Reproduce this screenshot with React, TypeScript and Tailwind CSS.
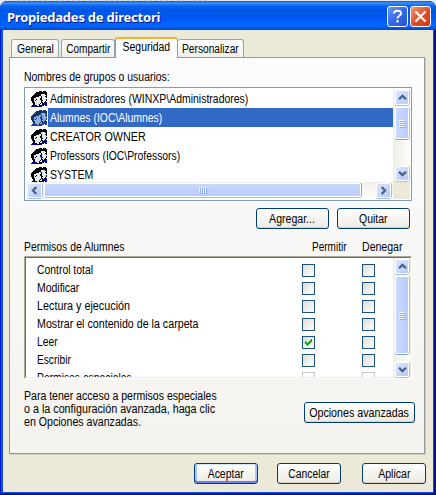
import React from "react";

const TEXT = "font-['Liberation_Sans',Arial,sans-serif] text-[12px] leading-[13px] whitespace-nowrap text-black";

const USER_PIXELS = [
  "........KKK.KKK.",
  ".....KKKKKKKKKKK",
  "....KKKKKKKKKKKK",
  "...KKKKKKKWWWWKK",
  "..KKKKKKKKWWWWWK",
  ".KKKKKKKWWKWWWBK",
  "KKKKKWWWWWKWWWWK",
  "KKKWWWWWWKKWWWWW",
  "KKKWWKWWWBKWWWWK",
  "KKKWKWWWWWKKWWWK",
  ".KKWWWWWWWKWWWK.",
  ".KKKWWWWWWKKWKBB",
  "..KKWWWWWKWKKBBB",
  "..KKWWWWKWWKBBBB",
  ".BBBKKWWKKBBB.BB",
  "BBBBBBKKKBB.....",
];

function UserIcon({ selected }: { selected?: boolean }) {
  const colors: Record<string, string> = selected
    ? { K: "#183462", W: "#8db0e2", B: "#183bb0" }
    : { K: "#000000", W: "#e4ebeb", B: "#0000b8" };
  return (
    <svg width="16" height="16" viewBox="0 0 16 16" shapeRendering="crispEdges" className="shrink-0">
      {USER_PIXELS.flatMap((row, y) =>
        row.split("").map((c, x) =>
          c === "." ? null : <rect key={`${x}-${y}`} x={x} y={y} width="1" height="1" fill={colors[c]} />
        )
      )}
    </svg>
  );
}

function Arrow({ turn }: { turn: string }) {
  return (
    <svg width="9" height="9" viewBox="0 0 9 9" className={turn}>
      <path d="M1 6.3L4.5 2.9L8 6.3" fill="none" stroke="#4d6185" strokeWidth="2.3" />
    </svg>
  );
}

const SCROLL_BTN =
  "flex shrink-0 items-center justify-center rounded-[2px] border border-white bg-linear-to-br from-[#dce6ff] to-[#b4c9fb] shadow-[0_1px_0_#a5bde8,1px_0_0_#a5bde8]";

function VScroll({ thumb, gap }: { thumb: string; gap: string }) {
  return (
    <div className="flex h-full w-[17px] shrink-0 flex-col bg-linear-to-r from-[#f0efe7] to-[#fefefb] pt-px pl-[2px]">
      <div className={`${SCROLL_BTN} h-[15px] w-[14px]`}><Arrow turn="" /></div>
      <div className={`mt-[2px] flex w-[14px] shrink-0 flex-col items-center justify-center gap-px rounded-[2px] border border-white bg-linear-to-r from-[#c9d8ff] to-[#b8ccfb] shadow-[0_1px_0_#85a1d4,1px_0_0_#a5bde8] ${thumb}`}>
        {[0, 1, 2, 3].map((i) => (
          <span key={i} className="h-px w-[6px] bg-[#eef4fe] shadow-[1px_1px_0_#8cb0f8]" />
        ))}
      </div>
      <div className={`${SCROLL_BTN} h-[15px] w-[14px] ${gap}`}><Arrow turn="rotate-180" /></div>
    </div>
  );
}

function Label({ text, fit }: { text: string; fit: string }) {
  return <span className={`inline-block shrink-0 origin-left ${fit}`}>{text}</span>;
}

function Button({ label, size, fit, primary }: { label: string; size: string; fit: string; primary?: boolean }) {
  return (
    <button
      className={`${TEXT} flex h-[21px] shrink-0 items-center justify-center rounded-[3px] border border-[#003c74] bg-linear-to-b from-white via-[#f5f4ef] to-[#eceae2] pt-px ${size} ${
        primary ? "shadow-[inset_0_1px_0_#cee7ff,inset_0_-2px_0_#6982ee,inset_2px_0_0_#a9c5f4,inset_-2px_0_0_#a9c5f4]" : "shadow-[inset_0_-1px_0_#d9d4c6]"
      }`}
    >
      <span className={`inline-block shrink-0 ${fit}`}>{label}</span>
    </button>
  );
}

function Check({ on, dim }: { on?: boolean; dim?: boolean }) {
  return (
    <div className={`size-[13px] shrink-0 border ${dim ? "border-[#cac8bb] bg-white" : "border-[#1c5180] bg-linear-to-br from-[#dcdcd7] to-white"}`}>
      {on && (
        <svg width="11" height="11" viewBox="0 0 11 11" shapeRendering="crispEdges">
          <path d="M2 4h1v1h1v1h1V5h1V4h1V3h1V2h1v3H8v1H7v1H6v1H5v1H4V8H3V7H2z" fill="#21a121" />
        </svg>
      )}
    </div>
  );
}

const TAB = "flex h-[18px] items-start justify-center rounded-t-[3px] border border-b-0 border-[#91a7b4] bg-linear-to-b from-white to-[#f0f0ea] pt-[3px]";

const USERS = [
  { name: "Administradores (WINXP\\Administradores)", fit: "scale-x-[0.872]" },
  { name: "Alumnes (IOC\\Alumnes)", fit: "scale-x-[0.868]" },
  { name: "CREATOR OWNER", fit: "scale-x-[0.895]" },
  { name: "Professors (IOC\\Professors)", fit: "scale-x-[0.864]" },
  { name: "SYSTEM", fit: "scale-x-[0.875]" },
];

const PERMISSIONS = [
  { name: "Control total", fit: "scale-x-[0.865]" },
  { name: "Modificar", fit: "scale-x-[0.87]" },
  { name: "Lectura y ejecución", fit: "scale-x-[0.9]" },
  { name: "Mostrar el contenido de la carpeta", fit: "scale-x-[0.89]" },
  { name: "Leer", fit: "scale-x-[0.86]", on: true },
  { name: "Escribir", fit: "scale-x-[0.845]" },
  { name: "Permisos especiales", fit: "scale-x-[0.86]", dim: true },
];

export default function App() {
  return (
    <div className="h-[495px] w-[436px] overflow-hidden bg-[#e4e8e6] bg-[repeating-linear-gradient(to_right,#e4e8e6_0px,#e4e8e6_4px,#a8aaa6_5px,#e4e8e6_6px,#e4e8e6_9px,#b4b6b2_11px)] bg-[length:200px_1px] bg-[position:8px_0px] bg-no-repeat pt-px">
      <div className="flex h-[494px] flex-col overflow-hidden rounded-t-[7px] bg-[#0831d9]">
        <header className="flex h-[29px] shrink-0 items-start bg-[linear-gradient(to_bottom,#0a55d8_0px,#3a91ff_2px,#0863ee_5px,#0055e5_9px,#0059ef_17px,#0066ff_25px,#0050dc_28px,#0042c4_29px)] pt-[5px] pr-[5px] pl-[7px]">
          <h1 className="grow pt-[3px] font-['Noto_Sans','Open_Sans',sans-serif] text-[13px] leading-[16px] font-bold tracking-[-0.22px] whitespace-nowrap text-white [text-shadow:1px_1px_0_#0a1883]">
            Propiedades de directori
          </h1>
          <div className="mr-[2px] flex size-[21px] items-center justify-center rounded-[3px] border border-white bg-linear-to-br from-[#6f98f4] via-[#3568e6] to-[#2453d4]">
            <svg width="15" height="15" viewBox="0 0 15 15" fill="none" stroke="#fff" strokeWidth="2">
              <path d="M4 4.5C4.3 1 11 .8 11 4.3c0 2.5-3.5 2.5-3.5 5.2" />
              <path d="M7.5 11v2.4" />
            </svg>
          </div>
          <div className="flex size-[21px] items-center justify-center rounded-[3px] border border-white bg-linear-to-br from-[#ef9279] via-[#e0512c] to-[#c6391a]">
            <svg width="15" height="15" viewBox="0 0 15 15" stroke="#fff" strokeWidth="2.2">
              <path d="M2.5 2.5l10 10M12.5 2.5l-10 10" />
            </svg>
          </div>
        </header>

        <div className="h-[465px] bg-[#0a50e6] px-[3px] pb-[3px] shadow-[inset_1px_0_0_#0019cf,inset_-2px_0_0_#00138c,inset_0_-2px_0_#00138c]">
          <main className="flex h-[462px] flex-col bg-[#ece9d8] pt-[7px] pr-[7px] pl-[6px]">
            <nav className={`${TEXT} flex h-[20px] shrink-0 items-end pl-[2px]`}>
              <div className={`${TAB} mr-[2px] w-[48px]`}><span className="scale-x-[0.86]">General</span></div>
              <div className={`${TAB} w-[54px]`}><span className="scale-x-[0.84]">Compartir</span></div>
              <div className="relative -mb-px flex h-[21px] w-[63px] items-start justify-center rounded-t-[3px] border-x border-t-[2px] border-x-[#919b9c] border-t-[#f7b12c] bg-[#fcfcfe] pt-[2px]">
                <span className="scale-x-[0.87]">Seguridad</span>
              </div>
              <div className={`${TAB} w-[66px] border-l-0`}><span className="shrink-0 scale-x-[0.85]">Personalizar</span></div>
            </nav>

            <section className="flex h-[397px] w-[416px] shrink-0 flex-col border border-[#919b9c] bg-linear-to-b from-[#fcfcfe] to-[#f4f3ee] pl-[14px] shadow-[1px_1px_0_#d0cebf]">
              <p className={`${TEXT} mt-[13px]`}><Label text="Nombres de grupos o usuarios:" fit="scale-x-[0.87]" /></p>

              <div className="mt-[3px] flex h-[114px] w-[388px] shrink-0 flex-col border border-[#7f9db9] bg-white p-px">
                <div className="flex h-[93px] w-full">
                  <ul className="h-[93px] w-[367px] overflow-hidden">
                    {USERS.map((u, i) => (
                      <li key={u.name} className="flex h-[19px] items-center pl-[5px]">
                        <UserIcon selected={i === 1} />
                        <span className={`${TEXT} ml-px flex h-[19px] grow items-center pt-px pl-[2px] ${i === 1 ? "bg-[#316ac5] !text-white" : ""}`}>
                          <Label text={u.name} fit={u.fit} />
                        </span>
                      </li>
                    ))}
                  </ul>
                  <VScroll thumb="h-[32px]" gap="mt-[27px]" />
                </div>
                <div className="flex h-[17px] w-full bg-[#ece9d8]">
                  <div className="flex h-[17px] w-[367px] bg-linear-to-b from-[#f0efe7] to-[#fefefb] pt-px pl-px">
                    <div className={`${SCROLL_BTN} h-[15px] w-[15px]`}><Arrow turn="-rotate-90" /></div>
                    <div className="ml-[2px] flex h-[14px] w-[317px] shrink-0 items-center justify-center gap-px rounded-[2px] border border-white bg-linear-to-b from-[#c9d8ff] to-[#b8ccfb] shadow-[0_1px_0_#a5bde8,1px_0_0_#85a1d4]">
                      {[0, 1, 2, 3].map((i) => (
                        <span key={i} className="h-[6px] w-px bg-[#eef4fe] shadow-[1px_1px_0_#8cb0f8]" />
                      ))}
                    </div>
                    <div className={`${SCROLL_BTN} ml-[15px] h-[15px] w-[15px]`}><Arrow turn="rotate-90" /></div>
                  </div>
                </div>
              </div>

              <div className="mt-[7px] flex h-[21px] w-[386px] shrink-0 justify-end gap-[8px]">
                <Button label="Agregar..." size="w-[73px]" fit="scale-x-[0.88]" />
                <Button label="Quitar" size="w-[73px]" fit="scale-x-[0.87]" />
              </div>

              <div className={`${TEXT} mt-[12px] flex h-[13px] shrink-0`}>
                <span className="w-[288px]"><Label text="Permisos de Alumnes" fit="scale-x-[0.865]" /></span>
                <span className="w-[50px]"><Label text="Permitir" fit="scale-x-[0.835]" /></span>
                <Label text="Denegar" fit="scale-x-[0.88]" />
              </div>

              <div className="mt-[2px] h-[123px] w-[388px] shrink-0 border border-t-[#aca899] border-r-white border-b-white border-l-[#aca899]">
                <div className="flex h-[121px] border border-t-[#716f64] border-r-[#f1efe2] border-b-[#f1efe2] border-l-[#716f64] bg-white">
                  <ul className="h-[119px] w-[367px] overflow-hidden pt-[3px]">
                    {PERMISSIONS.map((p) => (
                      <li key={p.name} className="flex h-[18px] items-center pl-[11px]">
                        <span className={`${TEXT} w-[265px] pt-px`}><Label text={p.name} fit={p.fit} /></span>
                        <Check on={p.on} dim={p.dim} />
                        <span className="w-[47px]" />
                        <Check dim={p.dim} />
                      </li>
                    ))}
                  </ul>
                  <VScroll thumb="h-[78px]" gap="mt-[8px]" />
                </div>
              </div>

              <div className="mt-[11px] flex shrink-0">
                <div className={`${TEXT} flex w-[280px] flex-col items-start`}>
                  <Label text="Para tener acceso a permisos especiales" fit="scale-x-[0.878]" />
                  <Label text="o a la configuración avanzada, haga clic" fit="scale-x-[0.895]" />
                  <Label text="en Opciones avanzadas." fit="scale-x-[0.885]" />
                </div>
                <div className="pt-[12px]">
                  <Button label="Opciones avanzadas" size="w-[111px]" fit="scale-x-[0.89]" />
                </div>
              </div>
            </section>

            <footer className="mt-[9px] flex justify-end">
              <Button label="Aceptar" size="mr-[19px] w-[64px]" fit="scale-x-[0.87]" primary />
              <Button label="Cancelar" size="mr-[21px] w-[64px]" fit="scale-x-[0.86]" />
              <Button label="Aplicar" size="w-[64px]" fit="scale-x-[0.88]" />
            </footer>
          </main>
        </div>
      </div>
    </div>
  );
}
